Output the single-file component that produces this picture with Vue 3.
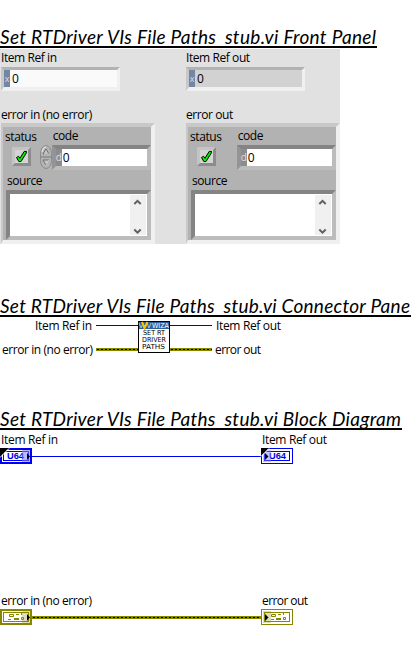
<script setup>
const titles = {
  front: { tail: 'stub.vi Front Panel', width: 377 },
  connector: { tail: 'stub.vi Connector Pane', width: 411 },
  block: { tail: 'stub.vi Block Diagram', width: 402 },
}
const columns = [
  { ref: 'Item Ref in', error: 'error in (no error)', input: true },
  { ref: 'Item Ref out', error: 'error out', input: false },
]
</script>

<template>
  <main class="page">
    <h2 class="title">
      <svg width="411" height="24">
        <text x="0" y="20" :textLength="titles.front.width - 1">Set RTDriver VIs File Paths<tspan dy="1.6">_</tspan><tspan dy="-1.6">{{ titles.front.tail }}</tspan></text>
        <rect x="0" y="22" :width="titles.front.width" height="2" />
      </svg>
    </h2>
    <section class="panel">
      <div v-for="c in columns" :key="c.ref" class="column">
        <div class="label ref-label">{{ c.ref }}</div>
        <div class="numeric" :class="{ readonly: !c.input }">
          <span class="radix">x</span><span class="value">0</span>
        </div>
        <div class="label error-label">{{ c.error }}</div>
        <div class="cluster">
          <div class="top-row">
            <div class="status">
              <div class="label status-label">status</div>
              <div class="led">
                <svg width="13" height="13" viewBox="0 0 13 13">
                  <path d="M1.5 7.5 L3.5 6.3 L5 8.2 L9.2 1.4 L11.5 1.4 L11.3 3 L6 11.5 L3.8 11.5 Z" fill="#00f000" stroke="#000" stroke-width="1" />
                </svg>
              </div>
            </div>
            <div class="spinner">
              <svg v-if="c.input" width="12" height="24" viewBox="0 0 12 24">
                <rect x=".5" y=".5" width="11" height="23" rx="5.5" ry="8" fill="#b4b4b4" stroke="#8c8c8c" />
                <path d="M2 7Q3 2 6 1.7" fill="none" stroke="#eee" />
                <path d="M1 12H11" stroke="#777" />
                <path d="M3 9L6 4L9 9Z M3 15L6 20L9 15Z" fill="#c8c8c8" stroke="#666" stroke-width=".9" />
                <path d="M4 9H9M6 20L9 15" stroke="#eee" stroke-width=".8" />
              </svg>
            </div>
            <div class="code">
              <div class="label code-label">code</div>
              <div class="code-field"><span class="radix dec">d</span><span class="value">0</span></div>
            </div>
          </div>
          <div class="label source-label">source</div>
          <div class="source">
            <div class="scroll">
              <svg width="16" height="40" viewBox="0 0 16 40">
                <path d="M4.3 9L7.5 5.8L10.7 9M4.3 34.5L7.5 37.7L10.7 34.5" fill="none" stroke="#606060" stroke-width="2" />
              </svg>
            </div>
          </div>
        </div>
      </div>
    </section>

    <h2 class="title second">
      <svg width="411" height="24">
        <text x="0" y="20" :textLength="titles.connector.width - 1">Set RTDriver VIs File Paths<tspan dy="1.6">_</tspan><tspan dy="-1.6">{{ titles.connector.tail }}</tspan></text>
        <rect x="0" y="22" :width="titles.connector.width" height="2" />
      </svg>
    </h2>
    <svg class="scene" width="411" height="40" viewBox="0 317 411 40">
      <g class="caption">
        <text x="35" y="330" textLength="57">Item Ref in</text>
        <text x="216" y="330" textLength="65">Item Ref out</text>
        <text x="2" y="354" textLength="91">error in (no error)</text>
        <text x="215" y="354" textLength="46">error out</text>
      </g>
      <path d="M96 325.5H138M170 325.5H212" stroke="#0000f0" />
      <path d="M96 349.5H138M170 349.5H212" stroke="#868600" stroke-width="3" />
      <path d="M97 349.5H138M171 349.5H212" stroke="#000" stroke-dasharray="2 2" />
      <rect x="138.5" y="321.5" width="31" height="31" fill="#fff" stroke="#000" />
      <rect x="139" y="322" width="30" height="7" fill="#30609a" />
      <path d="M139 323L141 328L143 323M147 323L149 328L151 323" fill="none" stroke="#a8bdd2" />
      <path d="M142 322L144.5 328L147.5 322" fill="none" stroke="#ffc400" stroke-width="2" />
      <text class="chip inverse" x="152" y="328" textLength="17" lengthAdjust="spacingAndGlyphs">WIZA</text>
      <g class="chip">
        <text x="143" y="335" textLength="22" lengthAdjust="spacingAndGlyphs">SET RT</text>
        <text x="142" y="342" textLength="24" lengthAdjust="spacingAndGlyphs">DRIVER</text>
        <text x="142" y="349" textLength="23" lengthAdjust="spacingAndGlyphs">PATHS</text>
      </g>
    </svg>

    <h2 class="title third">
      <svg width="411" height="24">
        <text x="0" y="20" :textLength="titles.block.width - 1">Set RTDriver VIs File Paths<tspan dy="1.6">_</tspan><tspan dy="-1.6">{{ titles.block.tail }}</tspan></text>
        <rect x="0" y="22" :width="titles.block.width" height="2" />
      </svg>
    </h2>
    <svg class="scene" width="411" height="200" viewBox="0 430 411 200">
      <g class="caption">
        <text x="1" y="444" textLength="57">Item Ref in</text>
        <text x="262" y="444" textLength="65">Item Ref out</text>
        <text x="1" y="605" textLength="91">error in (no error)</text>
        <text x="262" y="605" textLength="46">error out</text>
      </g>
      <path d="M32 456.5H261" stroke="#0000f0" />
      <g>
        <rect x="1" y="449" width="30" height="14" fill="#fff" stroke="#0000f0" stroke-width="2" />
        <rect x="3.5" y="451.5" width="25" height="9" fill="#fff" stroke="#0000f0" />
        <text class="type" x="7" y="459" textLength="17" lengthAdjust="spacingAndGlyphs">U64</text>
        <rect x="22" y="450" width="8" height="12" fill="#8080ff" fill-opacity=".55" />
        <path d="M27 453L30 456.5L27 460Z" />
        <path d="M0 457V448H9Z" />
        <path d="M0 457.5L9 448.5" stroke="#fff" />
      </g>
      <g>
        <rect x="261.5" y="448.5" width="31" height="15" fill="#fff" stroke="#0000f0" />
        <rect x="264.5" y="451.5" width="25" height="9" fill="#fff" stroke="#0000f0" />
        <text class="type" x="269" y="459" textLength="17" lengthAdjust="spacingAndGlyphs">U64</text>
        <rect x="263" y="450" width="8" height="12" fill="#8080ff" fill-opacity=".45" />
        <path d="M265 453L268.5 456.5L265 460Z" />
        <path d="M261 456V448H269Z" />
        <path d="M261 456.5L269 448.5" stroke="#fff" />
      </g>
      <path d="M32 617.5H261" stroke="#868600" stroke-width="3" />
      <path d="M33 617.5H261" stroke="#000" stroke-dasharray="2 2" />
      <g>
        <rect x="1" y="610" width="30" height="14" fill="#fff" stroke="#868600" stroke-width="2" />
        <rect x="3.5" y="612.5" width="25" height="9" fill="#fff" stroke="#868600" />
        <path d="M9.5 614.5h4v2h-4zM21.5 617.5h2v2h-2z" fill="none" stroke="#868600" />
        <path d="M16 614h3v1h-3zM21 613h1v2h-1zM8 619h3v1h-3zM14 618h5v2h-5z" fill="#868600" />
        <rect x="22" y="611" width="8" height="12" fill="#868600" fill-opacity=".28" />
        <path d="M27 614L30 617.5L27 621Z" />
      </g>
      <g>
        <rect x="261.5" y="609.5" width="31" height="15" fill="#fff" stroke="#868600" />
        <rect x="264.5" y="612.5" width="25" height="9" fill="#fff" stroke="#868600" />
        <path d="M271.5 614.5h4v2h-4zM283.5 617.5h2v2h-2z" fill="none" stroke="#868600" />
        <path d="M278 614h3v1h-3zM283 613h1v2h-1zM271 619h3v1h-3zM276 618h5v2h-5z" fill="#868600" />
        <rect x="263" y="611" width="8" height="12" fill="#868600" fill-opacity=".28" />
        <path d="M265 614L268.5 617.5L265 621Z" />
      </g>
    </svg>
  </main>
</template>

<style>
body { margin: 0; background: #fff; }
</style>

<style scoped>
.page {
  width: 411px;
  height: 650px;
  box-sizing: border-box;
  padding-top: 24px;
  overflow: hidden;
  background: #fff;
  color: #000;
  font-family: "Open Sans", "Noto Sans", sans-serif;
  font-size: 12px;
}
svg { display: block; }
.title { margin: 0; height: 24px; overflow: hidden; }
.title text { font: italic 400 19px Lato, sans-serif; }
.title.second { margin-top: 49px; }
.title.third { margin-top: 49px; }
.caption { font-size: 12px; }
.chip { font: 7px "DejaVu Sans", sans-serif; }
.inverse { fill: #fff; }
.type { font: bold 9px "Liberation Sans", sans-serif; fill: #0000f0; }

.panel {
  display: grid;
  grid-template-columns: 185px 155px;
  width: 340px;
  height: 195px;
  margin-top: 1px;
  background: #e1e1e1;
}
.column { padding-left: 1px; }
.label { height: 16px; line-height: 16px; letter-spacing: -0.42px; white-space: nowrap; }
.ref-label { margin-top: 1px; }
.numeric {
  display: flex;
  box-sizing: border-box;
  width: 119px;
  height: 24px;
  margin-top: 1px;
  border: 3px solid;
  border-bottom-width: 4px;
  border-color: #b2b2b2 #f0f0f0 #f0f0f0 #c8c8c8;
  background: #fafafa;
}
.readonly { background: #d2d2d2; }
.radix { width: 6px; background: #7386a3; color: #dde; font-size: 9px; line-height: 18px; text-align: center; }
.dec { background: #8c8c8c; font-size: 10px; line-height: 17px; }
.value { padding-left: 2px; line-height: 17px; }
.error-label { margin-top: 16px; }
.cluster {
  box-sizing: border-box;
  width: 154px;
  height: 121px;
  border: 4px solid;
  border-left-width: 2px;
  border-color: #c8c8c8 #f0f0f0 #f0f0f0 #c8c8c8;
  background: #b2b2b2;
}
.top-row { display: flex; height: 43px; }
.status { width: 37px; padding-left: 2px; }
.status-label { margin-top: 2px; }
.led {
  box-sizing: border-box;
  width: 19px;
  height: 19px;
  margin: 2px 0 0 7px;
  border: 3px solid;
  border-color: #c4c4c4 #8c8c8c #8c8c8c #c4c4c4;
  background: #d4d4d4;
}
.spinner { flex: none; width: 10px; margin-left: -2px; padding: 18px 2px 0 0; }
.code { width: 100px; }
.code-label { padding: 1px 0 0 1px; }
.code-field {
  display: flex;
  box-sizing: border-box;
  width: 99px;
  height: 25px;
  margin-top: 1px;
  border: 4px solid;
  border-color: #848484 #bcbcbc #bcbcbc #949494;
  background: #fff;
}
.code-field .value { padding-left: 1px; }
.source-label { margin: 3px 0 0 4px; }
.source {
  display: flex;
  justify-content: flex-end;
  box-sizing: border-box;
  width: 145px;
  height: 50px;
  margin: 1px 0 0 3px;
  border: 4px solid;
  border-color: #848484 #bcbcbc #bcbcbc #848484;
  background: #fff;
}
.scroll { width: 16px; height: 40px; margin: 1px 1px 0 0; background: #f0f0f0; }
</style>
